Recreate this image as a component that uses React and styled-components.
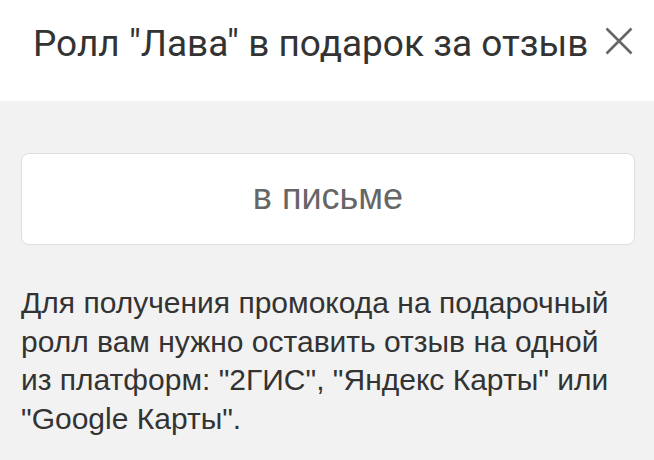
import React from 'react';
import styled, { createGlobalStyle } from 'styled-components';

const GlobalStyle = createGlobalStyle`
  html, body {
    margin: 0;
    padding: 0;
    background: #f2f2f2;
  }
  * { box-sizing: border-box; }
`;

const Page = styled.div`
  width: 654px;
  height: 460px;
  display: flex;
  flex-direction: column;
  background: #f2f2f2;
  overflow: hidden;
`;

const Header = styled.div`
  height: 101px;
  background: #ffffff;
  display: flex;
  align-items: center;
  padding: 0 20px 14px 33px;
`;

const Title = styled.h1`
  margin: 0;
  font-family: Roboto, "Liberation Sans", sans-serif;
  font-weight: 400;
  font-size: 37px;
  color: #333333;
  white-space: nowrap;
`;

const CloseButton = styled.button`
  margin-left: auto;
  margin-bottom: 6px;
  border: 0;
  background: none;
  padding: 0;
  width: 30px;
  height: 30px;
  display: flex;
  align-items: center;
  justify-content: center;
  cursor: pointer;
`;

const Body = styled.div`
  padding: 52px 19px 0 21px;
  display: flex;
  flex-direction: column;
  gap: 39px;
`;

const Field = styled.div`
  height: 92px;
  background: #ffffff;
  border: 1px solid #dedede;
  border-radius: 8px;
  display: flex;
  align-items: center;
  justify-content: center;
  font-family: "Liberation Sans", Arial, sans-serif;
  font-size: 36px;
  color: #666666;
  padding-bottom: 4px;
`;

const Note = styled.p`
  margin: 0;
  font-family: "Liberation Sans", Arial, sans-serif;
  font-size: 30px;
  line-height: 38.5px;
  color: #333333;
`;

function CloseIcon() {
  return (
    <svg width="28" height="28" viewBox="0 0 28 28">
      <path d="M1.5 1.5 L26.5 26.5 M26.5 1.5 L1.5 26.5" stroke="#666" strokeWidth="2.6" fill="none" />
    </svg>
  );
}

export default function App() {
  return (
    <Page>
      <GlobalStyle />
      <Header>
        <Title>Ролл "Лава" в подарок за отзыв</Title>
        <CloseButton aria-label="Закрыть">
          <CloseIcon />
        </CloseButton>
      </Header>
      <Body>
        <Field>в письме</Field>
        <Note>
          Для получения промокода на подарочный ролл вам нужно оставить отзыв на одной из платформ: "2ГИС", "Яндекс Карты" или "Google Карты".
        </Note>
      </Body>
    </Page>
  );
}
